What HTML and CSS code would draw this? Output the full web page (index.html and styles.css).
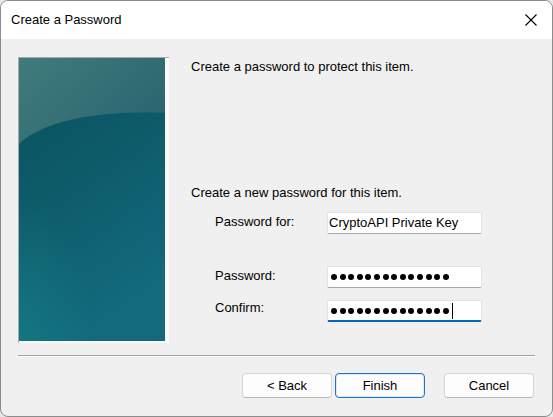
FILE: index.html
```html
<!DOCTYPE html>
<html>
<head>
<meta charset="utf-8">
<title>Create a Password</title>
<link rel="stylesheet" href="styles.css">
</head>
<body>
<div class="window">
  <div class="titlebar">
    <span class="title">Create a Password</span>
    <svg class="close" width="12" height="12" viewBox="0 0 12 12"><path d="M0.5 0.5 L11.5 11.5 M11.5 0.5 L0.5 11.5" stroke="#000" stroke-width="1.1" fill="none"/></svg>
  </div>
  <div class="dialog">
    <div class="main">
      <div class="sidepanel">
        <svg class="art" width="146" height="283" viewBox="0 0 146 283">
          <defs>
            <linearGradient id="base" x1="0" y1="0" x2="0.35" y2="1">
              <stop offset="0" stop-color="#0a505c"/>
              <stop offset="0.45" stop-color="#0d5a68"/>
              <stop offset="1" stop-color="#126a7c"/>
            </linearGradient>
            <radialGradient id="glow" cx="0" cy="1" r="0.5">
              <stop offset="0" stop-color="#147a82" stop-opacity="0.8"/>
              <stop offset="1" stop-color="#147a82" stop-opacity="0"/>
            </radialGradient>
            <linearGradient id="hl" x1="0" y1="0" x2="1" y2="0.6">
              <stop offset="0" stop-color="#407c7c"/>
              <stop offset="1" stop-color="#2b6670"/>
            </linearGradient>
          </defs>
          <rect width="146" height="283" fill="url(#base)"/>
          <rect width="146" height="283" fill="url(#glow)"/>
          <path d="M0 0 H146 V55 C95 53 30 58 0 86 Z" fill="url(#hl)"/>
        </svg>
      </div>
      <div class="content">
        <p class="line">Create a password to protect this item.</p>
        <p class="line second">Create a new password for this item.</p>
        <div class="form">
          <div class="row">
            <span class="label">Password for:</span>
            <div class="field"><span class="value">CryptoAPI Private Key</span></div>
          </div>
          <div class="row gap-large">
            <span class="label">Password:</span>
            <div class="field dots">
              <i></i><i></i><i></i><i></i><i></i><i></i><i></i><i></i><i></i><i></i><i></i><i></i><i></i><i></i>
            </div>
          </div>
          <div class="row gap-small">
            <span class="label label-up">Confirm:</span>
            <div class="field dots focused">
              <i></i><i></i><i></i><i></i><i></i><i></i><i></i><i></i><i></i><i></i><i></i><i></i><i></i><i></i>
              <b class="caret"></b>
            </div>
          </div>
        </div>
      </div>
    </div>
    <div class="separator"></div>
    <div class="buttons">
      <button class="btn">&lt; Back</button>
      <button class="btn default">Finish</button>
      <button class="btn cancel">Cancel</button>
    </div>
  </div>
</div>
</body>
</html>
```
FILE: styles.css
```css
html, body {
  margin: 0;
  padding: 0;
}
body {
  background: #e6e6e6;
  font-family: "Liberation Sans", Arial, sans-serif;
  font-size: 13px;
  color: #000;
}
.window {
  width: 553px;
  height: 417px;
  box-sizing: border-box;
  border: 1px solid #8c8c8c;
  border-radius: 8px;
  overflow: hidden;
  background: #f0f0f0;
  display: flex;
  flex-direction: column;
}
.titlebar {
  height: 38px;
  background: #ffffff;
  display: flex;
  align-items: center;
  justify-content: space-between;
  padding-left: 10px;
  padding-right: 15px;
  flex-shrink: 0;
}
.title {
  font-size: 13px;
  line-height: 16px;
  color: #000;
}
.close {
  display: block;
}
.dialog {
  flex: 1;
  padding: 18px 17px 0 17px;
  display: flex;
  flex-direction: column;
}
.main {
  display: flex;
  height: 286px;
}
.sidepanel {
  width: 151px;
  height: 286px;
  box-sizing: border-box;
  border-top: 1px solid #a8a8a8;
  border-left: 1px solid #a8a8a8;
  background: #fafafa;
  flex-shrink: 0;
}
.art {
  display: block;
}
.content {
  margin-left: 22px;
  padding-top: 2px;
  flex: 1;
}
.line {
  margin: 0;
  line-height: 16px;
  white-space: nowrap;
}
.line.second {
  margin-top: 110px;
}
.form {
  margin-top: 11px;
  padding-left: 24px;
  display: flex;
  flex-direction: column;
}
.row {
  display: flex;
  align-items: flex-start;
}
.row.gap-large {
  margin-top: 32px;
}
.row.gap-small {
  margin-top: 12px;
}
.label {
  width: 112px;
  line-height: 16px;
  padding-top: 2px;
  flex-shrink: 0;
}
.label.label-up {
  padding-top: 0;
}
.field {
  width: 155px;
  height: 22px;
  box-sizing: border-box;
  background: #ffffff;
  border: 1px solid #e3e3e3;
  border-bottom-color: #a6a6a6;
  border-radius: 2px;
  display: flex;
  align-items: center;
  padding-left: 1px;
  position: relative;
}
.value {
  line-height: 16px;
  white-space: nowrap;
}
.dots {
  padding-left: 3px;
  gap: 2.6px;
}
.dots i {
  display: block;
  width: 6px;
  height: 6px;
  border-radius: 50%;
  background: #000;
}
.field.focused {
  border-bottom: 2px solid #0067c0;
  padding-top: 1px;
}
.caret {
  display: block;
  width: 1px;
  height: 16px;
  background: #000;
  margin-left: 1px;
}
.separator {
  margin-top: 12px;
  height: 1px;
  background: #a0a0a0;
  border-bottom: 1px solid #ffffff;
}
.buttons {
  margin-top: 16px;
  display: flex;
  justify-content: flex-end;
  padding-right: 1px;
}
.btn {
  width: 90px;
  height: 25px;
  box-sizing: border-box;
  margin: 0;
  padding: 0;
  font-family: "Liberation Sans", Arial, sans-serif;
  font-size: 13px;
  color: #000;
  background: #fdfdfd;
  border: 1px solid #d4d4d4;
  border-bottom-color: #b8b8b8;
  border-radius: 4px;
}
.btn + .btn {
  margin-left: 3px;
}
.btn.default {
  border: 1px solid #1f72c8;
  box-shadow: inset 0 0 0 1px #dbe8f6;
}
.btn.cancel {
  margin-left: 19px;
}
```
